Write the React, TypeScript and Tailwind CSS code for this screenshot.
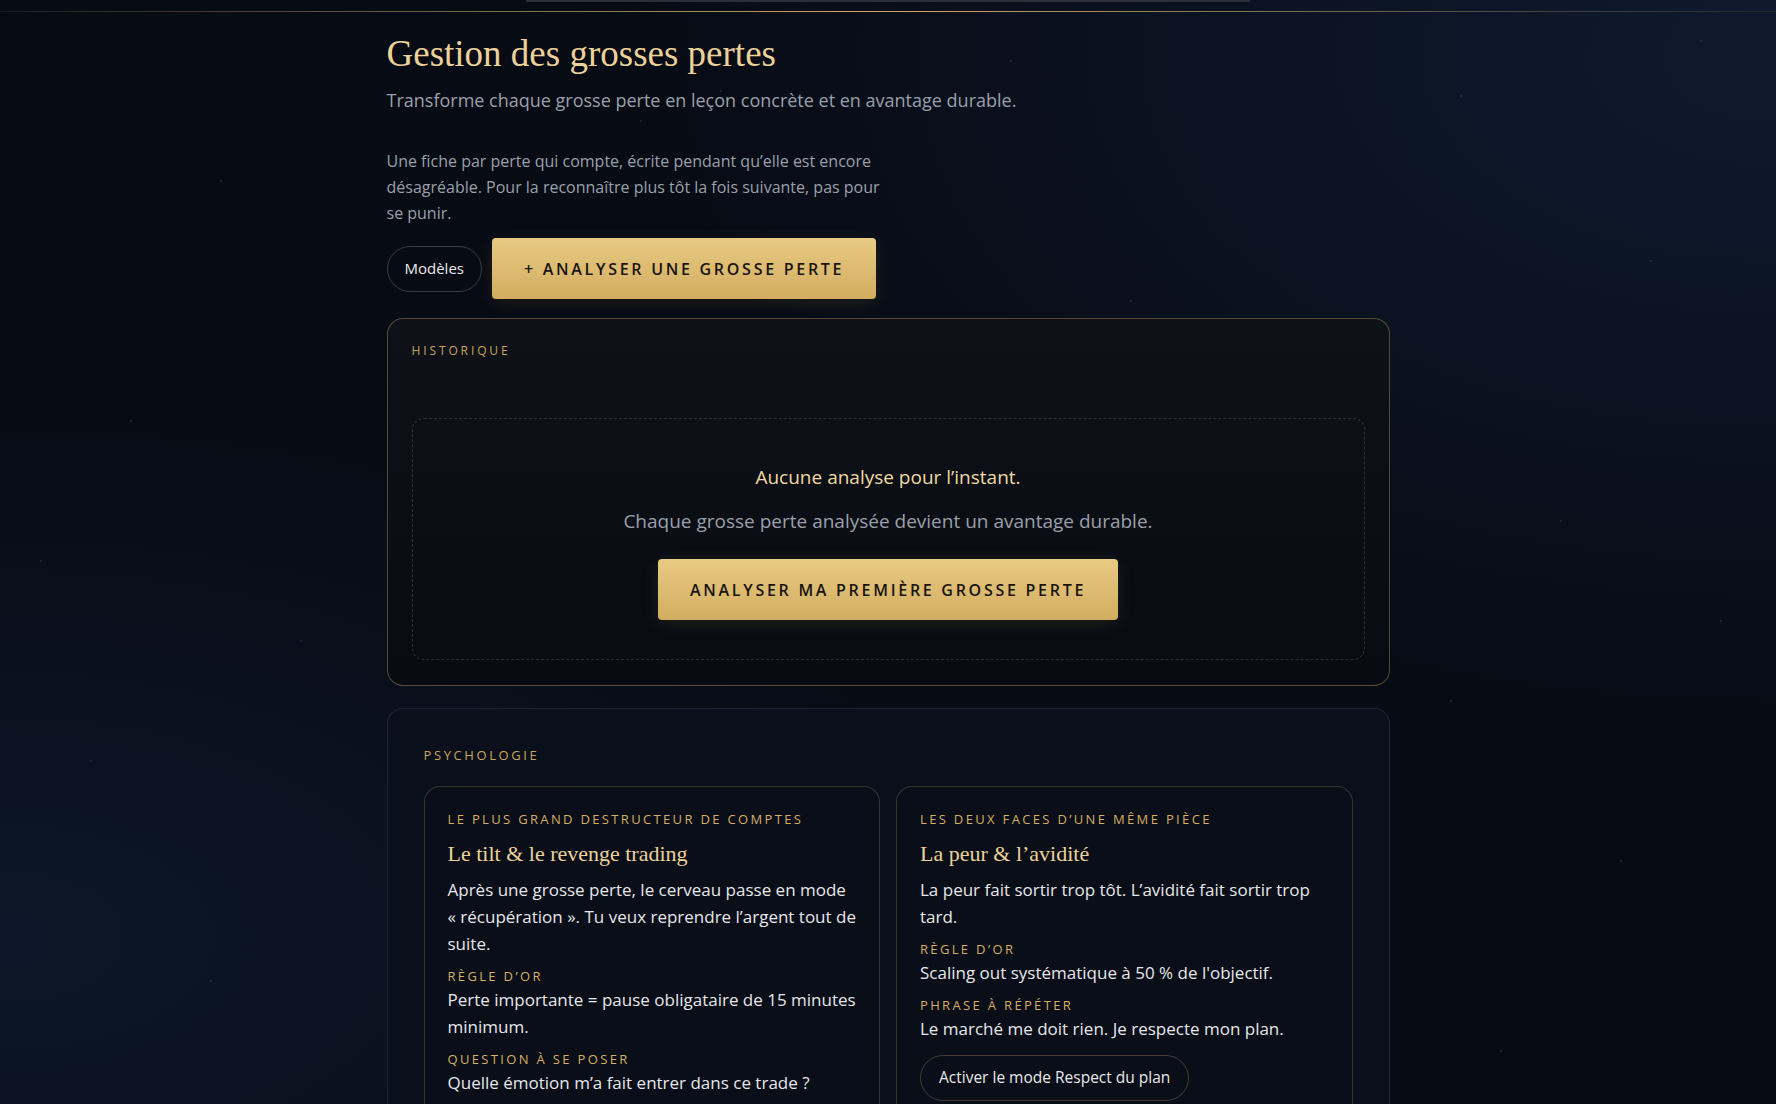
import React from 'react';

const sans = { fontFamily: '"Open Sans", "Noto Sans", sans-serif' };
const serif = { fontFamily: '"Liberation Serif", "DejaVu Serif", serif' };

// faint scattered specks in the background
const DOTS = [
  [220, 180], [640, 120], [1010, 60], [1460, 95], [1700, 40], [130, 420], [480, 380], [1130, 300],
  [1560, 520], [1650, 260], [90, 760], [300, 640], [1450, 700], [1620, 860], [210, 980], [1500, 1050],
  [720, 90], [1290, 1000], [40, 560], [1720, 620],
];

const Label = ({ children, className = '' }: { children: React.ReactNode; className?: string }) => (
  <div className={`text-[13px] font-medium uppercase leading-[20px] tracking-[0.18em] text-[#d6af63] ${className}`}>
    {children}
  </div>
);

const GoldButton = ({ children }: { children: React.ReactNode }) => (
  <button className="h-[61px] rounded-[4px] bg-gradient-to-b from-[#e8ca82] to-[#d2ad60] px-8 text-[16px] font-semibold uppercase tracking-[0.17em] text-[#17140f] shadow-[0_4px_18px_rgba(210,170,90,0.12)]">
    {children}
  </button>
);

const Body = ({ children, className = '' }: { children: React.ReactNode; className?: string }) => (
  <p className={`text-[17px] leading-[27px] text-[#e6e7ea] ${className}`}>{children}</p>
);

export default function App() {
  return (
    <div className="relative h-[1104px] w-full overflow-hidden bg-[#070b14] text-white" style={sans}>
      {/* Background glow */}
      <div className="absolute inset-0 bg-[radial-gradient(ellipse_at_100%_5%,#0f1a2f_0%,transparent_45%)]" />
      <div className="absolute inset-0 bg-[radial-gradient(ellipse_at_0%_85%,#0d1729_0%,transparent_40%)]" />
      {DOTS.map(([x, y], i) => (
        <div
          key={i}
          className="absolute h-[2px] w-[2px] rounded-full bg-[#34405a]/60"
          style={{ left: x, top: y }}
        />
      ))}

      <div className="relative">
        {/* Top strip */}
        <div className="mx-auto h-[2px] w-[724px] bg-[#2a2f3a]" />
        <div className="mt-[9px] h-px w-full bg-gradient-to-r from-[#3a3a3a]/40 via-[#c9a96a] to-[#3a3a3a]/40" />

        <main className="mx-auto w-[1003px] pt-[19px]">
          <h1 className="text-[37px] leading-[46px] text-[#ecd29a]" style={serif}>
            Gestion des grosses pertes
          </h1>
          <p className="mt-[9px] text-[18px] leading-[28px] text-[#9aa0ab]">
            Transforme chaque grosse perte en leçon concrète et en avantage durable.
          </p>

          <p className="mt-[34px] max-w-[505px] text-[16px] leading-[26px] text-[#9aa0ab]">
            Une fiche par perte qui compte, écrite pendant qu’elle est encore désagréable. Pour la reconnaître plus
            tôt la fois suivante, pas pour se punir.
          </p>

          <div className="mt-[12px] flex items-center gap-[10px]">
            <button className="h-[46px] rounded-full border border-[#3a3d45] px-[17px] text-[15px] text-[#e8e8ea]">
              Modèles
            </button>
            <GoldButton>+ Analyser une grosse perte</GoldButton>
          </div>

          {/* Historique */}
          <section className="mt-[19px] rounded-[16px] border border-[#c9a86a]/40 bg-gradient-to-b from-[#0e1118] to-[#080b12] px-[24px] pb-[25px] pt-[23px]">
            <div className="text-[12px] font-medium uppercase tracking-[0.24em] text-[#c9a55c]">Historique</div>
            <div className="mt-[58px] flex flex-col items-center rounded-[12px] border border-dashed border-white/15 pb-[39px] pt-[44px]">
              <div className="text-[19px] font-medium text-[#f0d9a2]">Aucune analyse pour l’instant.</div>
              <div className="mt-[15px] text-[19px] text-[#9aa0ab]">
                Chaque grosse perte analysée devient un avantage durable.
              </div>
              <div className="mt-[24px]">
                <GoldButton>Analyser ma première grosse perte</GoldButton>
              </div>
            </div>
          </section>

          {/* Psychologie */}
          <section className="mt-[22px] rounded-[16px] border border-[#5a6a8a]/25 bg-[#0a101c]/90 px-[36px] pt-[37px] pb-[40px]">
            <div className="text-[13px] font-medium uppercase tracking-[0.2em] text-[#c9a55c]">Psychologie</div>
            <div className="mt-[20px] grid grid-cols-2 gap-[16px]">
              <div className="rounded-[16px] border border-[#c9a86a]/25 bg-[#090e18] px-[23px] pt-[22px] pb-[24px]">
                <Label>Le plus grand destructeur de comptes</Label>
                <h3 className="mt-[10px] text-[22px] leading-[30px] text-[#ecd29a]" style={serif}>
                  Le tilt &amp; le revenge trading
                </h3>
                <Body className="mt-[7px]">
                  Après une grosse perte, le cerveau passe en mode « récupération ». Tu veux reprendre l’argent tout de
                  suite.
                </Body>
                <Label className="mt-[9px]">Règle d’or</Label>
                <Body>Perte importante = pause obligataire de 15 minutes minimum.</Body>
                <Label className="mt-[9px]">Question à se poser</Label>
                <Body>Quelle émotion m’a fait entrer dans ce trade ?</Body>
              </div>

              <div className="rounded-[16px] border border-[#c9a86a]/25 bg-[#090e18] px-[23px] pt-[22px] pb-[24px]">
                <Label>Les deux faces d’une même pièce</Label>
                <h3 className="mt-[10px] text-[22px] leading-[30px] text-[#ecd29a]" style={serif}>
                  La peur &amp; l’avidité
                </h3>
                <Body className="mt-[7px]">La peur fait sortir trop tôt. L’avidité fait sortir trop tard.</Body>
                <Label className="mt-[9px]">Règle d’or</Label>
                <Body>Scaling out systématique à 50 % de l'objectif.</Body>
                <Label className="mt-[9px]">Phrase à répéter</Label>
                <Body>Le marché me doit rien. Je respecte mon plan.</Body>
                <button className="mt-[13px] h-[46px] rounded-full border border-[#c9a86a]/30 px-[18px] text-[15.5px] text-[#e8e8ea]">
                  Activer le mode Respect du plan
                </button>
              </div>
            </div>
          </section>
        </main>
      </div>
    </div>
  );
}
